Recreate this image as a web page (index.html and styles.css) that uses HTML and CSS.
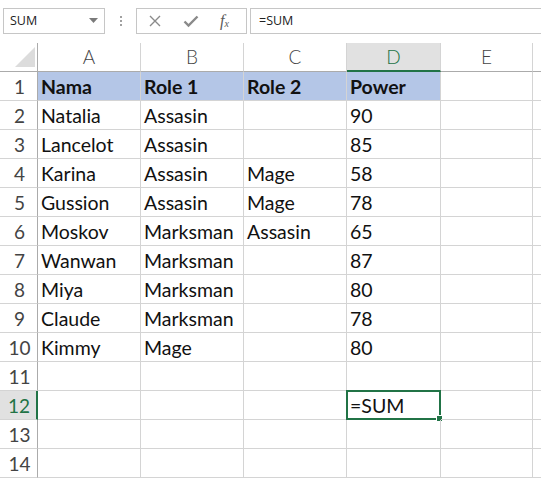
FILE: index.html
```html
<!DOCTYPE html>
<html>
<head>
<meta charset="utf-8">
<link rel="stylesheet" href="styles.css">
</head>
<body>
<div class="app">
  <div class="fbar">
    <div class="namebox">
      <span class="nb-text">SUM</span>
      <svg class="nb-arrow" width="9" height="5" viewBox="0 0 9 5"><path d="M0 0H9L4.5 5Z" fill="#7a7a7a"/></svg>
    </div>
    <div class="dots"><span></span><span></span><span></span></div>
    <div class="fxbox">
      <svg class="ic" width="14" height="14" viewBox="0 0 14 14"><path d="M2 2L12 12M12 2L2 12" stroke="#8a8a8a" stroke-width="1.4" fill="none"/></svg>
      <svg class="ic" width="16" height="14" viewBox="0 0 16 14"><path d="M1.5 7.5L5.5 11.5L14.5 2.5" stroke="#8a8a8a" stroke-width="2.4" fill="none"/></svg>
      <span class="fx">f<sub>x</sub></span>
    </div>
    <div class="formula">=SUM</div>
  </div>
  <div class="sheet">
    <div class="corner"><svg width="20" height="20" viewBox="0 0 20 20"><path d="M20 0V20H0Z" fill="#dcdcdc"/></svg></div>
    <div class="ch">A</div><div class="ch">B</div><div class="ch">C</div><div class="ch sel">D</div><div class="ch">E</div><div class="ch last"></div>

    <div class="rh">1</div><div class="c hd">Nama</div><div class="c hd">Role 1</div><div class="c hd">Role 2</div><div class="c hd">Power</div><div class="c"></div><div class="c last"></div>
    <div class="rh">2</div><div class="c">Natalia</div><div class="c">Assasin</div><div class="c"></div><div class="c">90</div><div class="c"></div><div class="c last"></div>
    <div class="rh">3</div><div class="c">Lancelot</div><div class="c">Assasin</div><div class="c"></div><div class="c">85</div><div class="c"></div><div class="c last"></div>
    <div class="rh">4</div><div class="c">Karina</div><div class="c">Assasin</div><div class="c">Mage</div><div class="c">58</div><div class="c"></div><div class="c last"></div>
    <div class="rh">5</div><div class="c">Gussion</div><div class="c">Assasin</div><div class="c">Mage</div><div class="c">78</div><div class="c"></div><div class="c last"></div>
    <div class="rh">6</div><div class="c">Moskov</div><div class="c">Marksman</div><div class="c">Assasin</div><div class="c">65</div><div class="c"></div><div class="c last"></div>
    <div class="rh">7</div><div class="c">Wanwan</div><div class="c">Marksman</div><div class="c"></div><div class="c">87</div><div class="c"></div><div class="c last"></div>
    <div class="rh">8</div><div class="c">Miya</div><div class="c">Marksman</div><div class="c"></div><div class="c">80</div><div class="c"></div><div class="c last"></div>
    <div class="rh">9</div><div class="c">Claude</div><div class="c">Marksman</div><div class="c"></div><div class="c">78</div><div class="c"></div><div class="c last"></div>
    <div class="rh">10</div><div class="c">Kimmy</div><div class="c">Mage</div><div class="c"></div><div class="c">80</div><div class="c"></div><div class="c last"></div>
    <div class="rh">11</div><div class="c"></div><div class="c"></div><div class="c"></div><div class="c"></div><div class="c"></div><div class="c last"></div>
    <div class="rh sel">12</div><div class="c"></div><div class="c"></div><div class="c"></div><div class="c active">=SUM<span class="handle"></span></div><div class="c"></div><div class="c last"></div>
    <div class="rh">13</div><div class="c"></div><div class="c"></div><div class="c"></div><div class="c"></div><div class="c"></div><div class="c last"></div>
    <div class="rh">14</div><div class="c"></div><div class="c"></div><div class="c"></div><div class="c"></div><div class="c"></div><div class="c last"></div>
  </div>
</div>
</body>
</html>
```
FILE: styles.css
```css
* { box-sizing: border-box; }
html, body { margin: 0; padding: 0; background: #fff; }
body { font-family: "Lato", "Noto Sans", sans-serif; overflow: hidden; }
.app { width: 541px; height: 480px; overflow: hidden; }

.fbar { display: flex; align-items: center; height: 43px; padding: 8px 0 10px 3px; }
.namebox { width: 102px; height: 26px; border: 1px solid #c6c6c6; display: flex; align-items: center; justify-content: space-between; padding: 0 6px 0 6px; }
.nb-text { font-family: "Open Sans", "Noto Sans", sans-serif; font-size: 12.5px; color: #222; }
.dots { width: 31px; display: flex; flex-direction: column; align-items: center; gap: 2px; }
.dots span { width: 2px; height: 2px; background: #a0a0a0; display: block; }
.fxbox { width: 111px; height: 26px; border: 1px solid #c6c6c6; display: flex; align-items: center; padding-left: 11px; gap: 0; }
.fxbox .ic:nth-child(1) { margin-right: 21px; }
.fxbox .ic:nth-child(2) { margin-right: 21px; }
.fx { font-family: "Liberation Serif", serif; font-style: italic; font-size: 16px; color: #5a5a5a; line-height: 1; }
.fx sub { font-size: 10px; vertical-align: -1px; }
.formula { flex: 1; height: 26px; margin-left: 3px; border-top: 1px solid #c6c6c6; border-bottom: 1px solid #c6c6c6; border-left: 1px solid #c6c6c6; font-family: "Open Sans", "Noto Sans", sans-serif; font-size: 12.5px; color: #222; padding: 3px 0 0 8px; }

.sheet { display: grid; grid-template-columns: 38px 103px 103px 103px 94px 92px 8px; grid-auto-rows: 29px; }
.corner { border-right: 1px solid #ababab; border-bottom: 1px solid #ababab; display: flex; align-items: flex-end; justify-content: flex-end; padding: 0 2px 4px 0; }
.ch { border-right: 1px solid #d4d4d4; border-bottom: 1px solid #ababab; text-align: center; font-size: 19px; color: #444; line-height: 28px; font-weight: 300; }
.ch.sel { background: #e1e1e1; color: #217346; border-bottom: 2px solid #217346; }
.ch.last, .c.last { border-right: none; }
.rh { border-right: 1px solid #ababab; border-bottom: 1px solid #d4d4d4; text-align: center; font-size: 19px; color: #444; line-height: 29px; font-weight: 400; padding-left: 2px; }
.rh.sel { background: #e1e1e1; color: #217346; border-right: 2px solid #217346; }
.c { border-right: 1px solid #d4d4d4; border-bottom: 1px solid #d4d4d4; font-size: 19.5px; color: #111; padding-left: 3px; line-height: 30px; white-space: nowrap; position: relative; }
.c.hd { background: #b4c6e7; font-weight: 700; }
.c.active { border: 2px solid #217346; margin: -1px 0 0 -1px; padding-left: 2px; line-height: 28px; }
.handle { position: absolute; right: -4px; bottom: -4px; width: 7px; height: 7px; background: #217346; border: 1px solid #fff; }
```
